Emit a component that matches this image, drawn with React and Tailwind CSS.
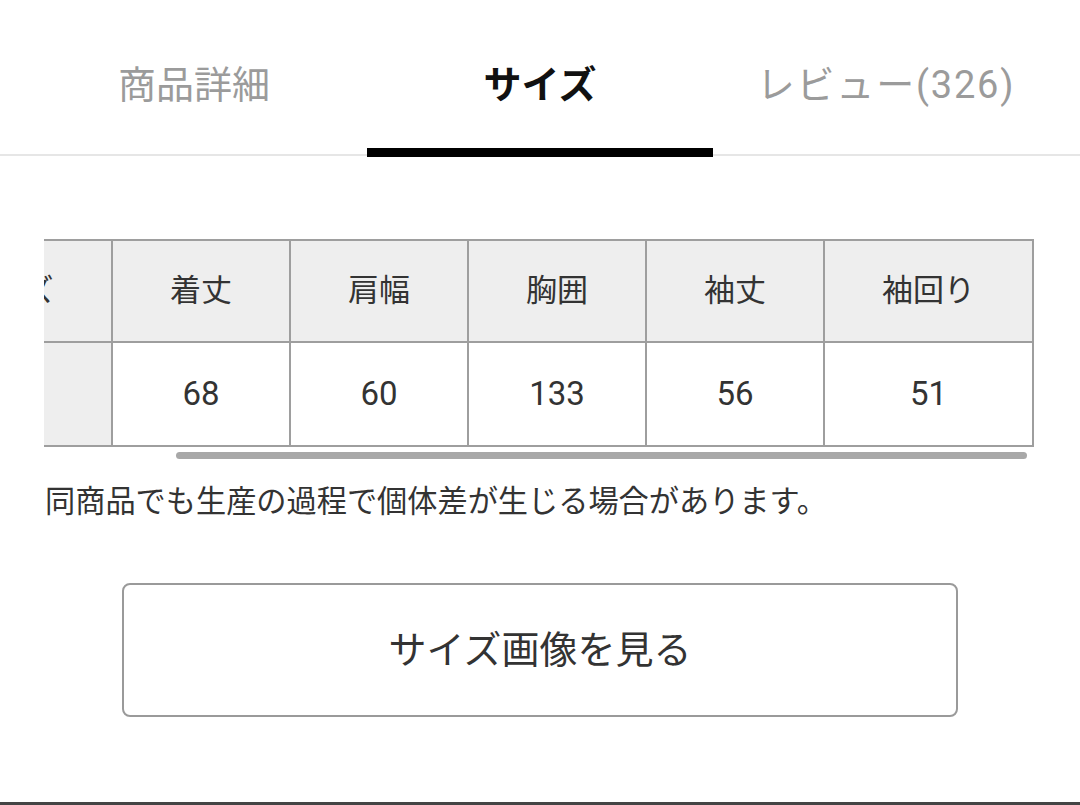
import React from 'react';

const FONT = { fontFamily: 'Roboto, "Noto Sans CJK JP", sans-serif' };

const tabs = [
    { label: '商品詳細', active: false, extra: '' },
    { label: 'サイズ', active: true, extra: '' },
    { label: 'レビュー(326)', active: false, extra: 'tracking-[1.8px]' },
];

const columns = [
    { head: 'サイズ', value: '', w: 'w-[209px]', first: true },
    { head: '着丈', value: '68', w: 'w-[178px]' },
    { head: '肩幅', value: '60', w: 'w-[178px]' },
    { head: '胸囲', value: '133', w: 'w-[178px]' },
    { head: '袖丈', value: '56', w: 'w-[178px]' },
    { head: '袖回り', value: '51', w: 'w-[209px]' },
];

const App = () => {
    return (
        <div className="w-[1080px] h-[805px] bg-white flex flex-col overflow-hidden" style={FONT}>
            {/* Tabs */}
            <div className="relative z-10 flex px-[21px] h-[157px]">
                {tabs.map((t) => (
                    <div key={t.label} className="flex-1 flex flex-col">
                        <div
                            className={`flex-1 flex items-center justify-center pt-[22px] text-[38px] ${t.extra} ${t.active ? 'text-[#111] font-bold' : 'text-[#9b9b9b]'}`}
                        >
                            {t.label}
                        </div>
                        <div className={`h-[9px] ${t.active ? 'bg-black' : ''}`} />
                    </div>
                ))}
            </div>
            <div className="h-[2px] -mt-[3px] bg-[#e6e6e6]" />

            {/* Size table (scrolled to the end) */}
            <div className="mt-[83px] ml-[44px] w-[990px] overflow-hidden flex justify-end">
                <table className="shrink-0 border-collapse text-[#333]">
                    <thead>
                        <tr>
                            {columns.map((c) => (
                                <th
                                    key={c.head}
                                    className={`${c.w} h-[102px] bg-[#eeeeee] border-2 border-[#9e9e9e] font-normal text-[31px] text-center`}
                                >
                                    {c.head}
                                </th>
                            ))}
                        </tr>
                    </thead>
                    <tbody>
                        <tr>
                            {columns.map((c) => (
                                <td
                                    key={c.head}
                                    className={`${c.w} h-[104px] border-2 border-[#9e9e9e] text-[33px] text-center ${c.first ? 'bg-[#eeeeee]' : 'bg-white'}`}
                                >
                                    {c.value}
                                </td>
                            ))}
                        </tr>
                    </tbody>
                </table>
            </div>

            {/* Scrollbar */}
            <div className="mt-[5px] ml-[176px] w-[851px] h-[7px] rounded-full bg-[#a8a8a8]" />

            {/* Note */}
            <p className="mt-[23px] ml-[45px] text-[30.2px] leading-[40px] text-[#333] whitespace-nowrap">
                同商品でも生産の過程で個体差が生じる場合があります。
            </p>

            {/* Button */}
            <button className="mt-[61px] ml-[122px] w-[836px] h-[134px] shrink-0 border-2 border-[#9a9a9a] rounded-[8px] bg-white text-[38px] text-[#333] flex items-center justify-center">
                サイズ画像を見る
            </button>

            <div className="mt-auto h-[3px] bg-[#444]" />
        </div>
    );
};

export default App;
